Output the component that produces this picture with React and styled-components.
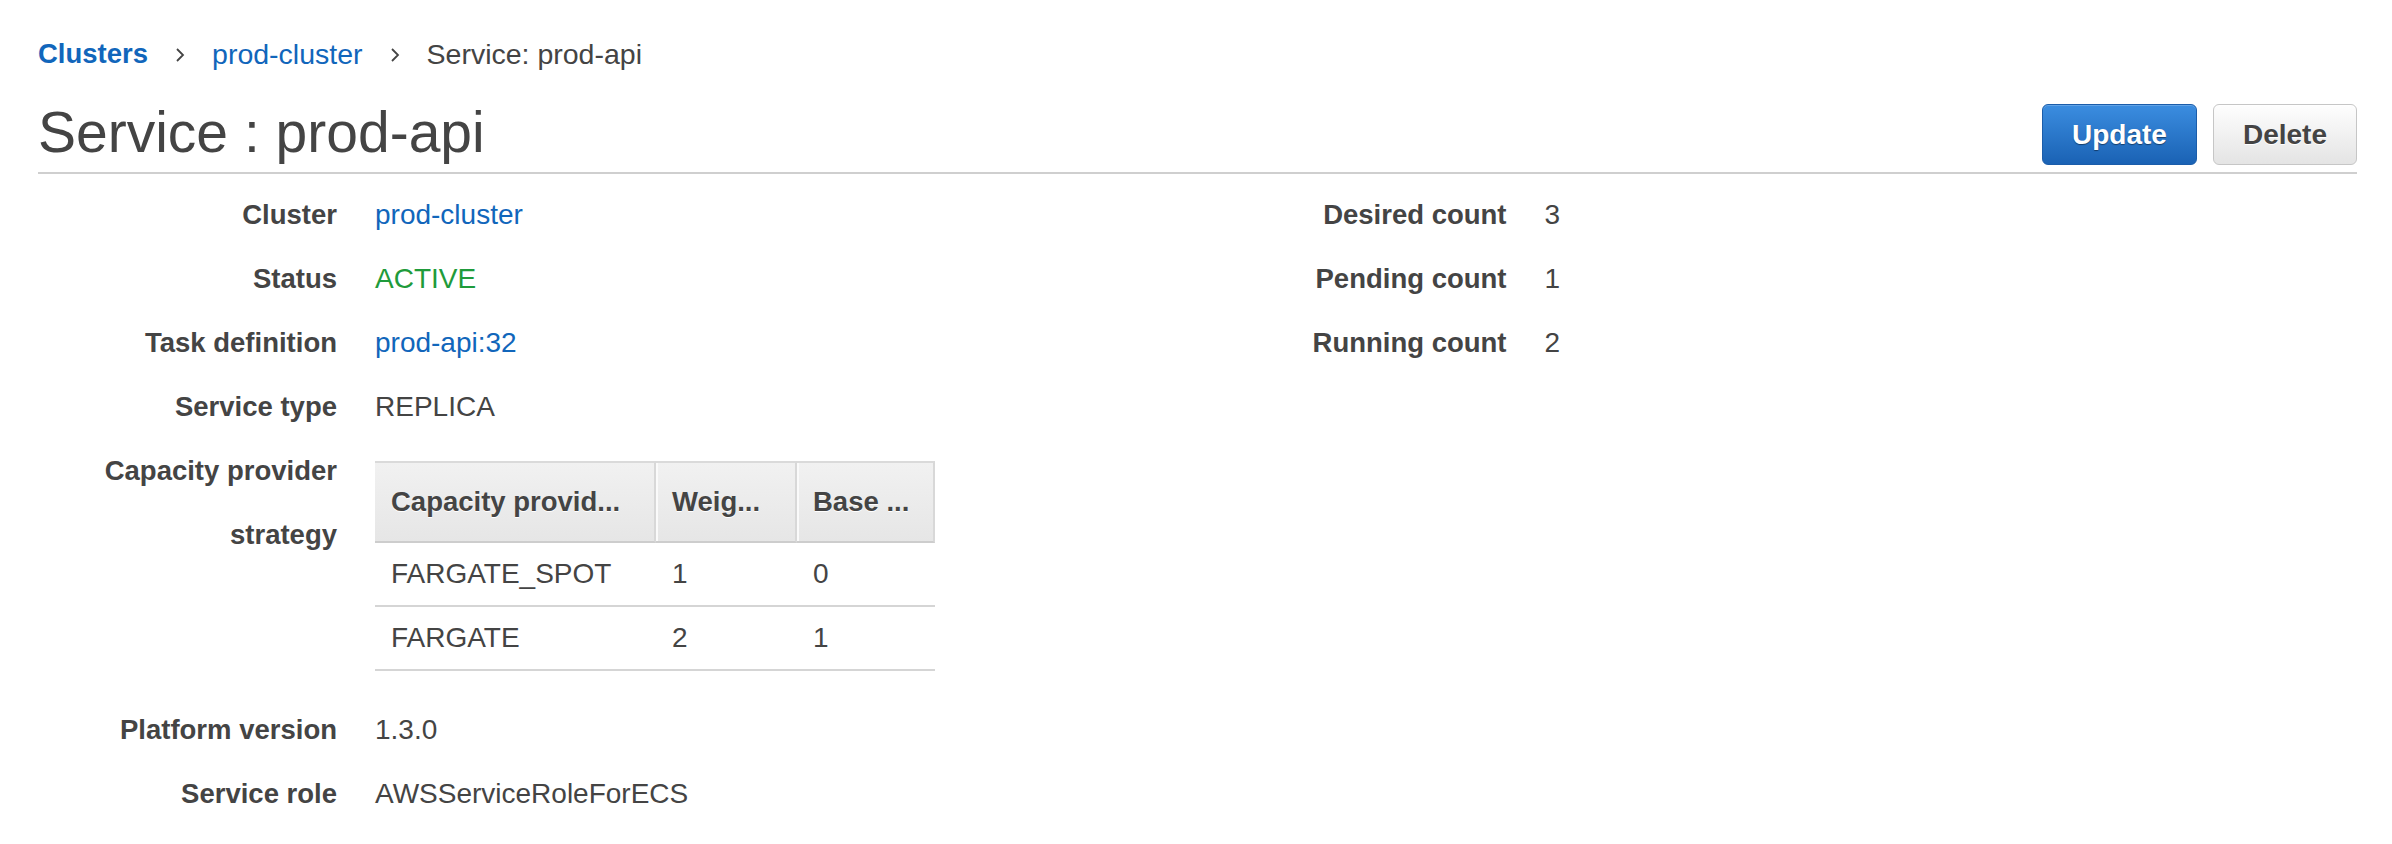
import React from 'react';
import styled, { createGlobalStyle } from 'styled-components';

const GlobalStyle = createGlobalStyle`
  body {
    margin: 0;
    background: #fff;
    font-family: "Liberation Sans", Arial, Helvetica, sans-serif;
    color: #444;
  }
`;

const Page = styled.div`
  padding: 38px 35px 0 38px;
  font-size: 28px;
`;

const Breadcrumbs = styled.nav`
  display: flex;
  align-items: center;
  gap: 27px;
  height: 32px;
  line-height: 32px;
`;

const Crumb = styled.a`
  color: ${props => (props.current ? '#444' : '#1166bb')};
  font-weight: ${props => (props.strong ? 700 : 400)};
  font-size: ${props => (props.strong ? '27.5px' : '28.5px')};
  text-decoration: none;
`;

const Chevron = styled.svg`
  width: 10px;
  height: 16px;
  margin-top: 2px;
`;

const HeaderRow = styled.div`
  display: flex;
  align-items: flex-end;
  justify-content: space-between;
  margin-top: 34px;
  padding-bottom: 7px;
  border-bottom: 2px solid #cfcfcf;
`;

const Title = styled.h1`
  margin: 0 0 4px;
  font-size: 57px;
  line-height: 57px;
  font-weight: 400;
  color: #444;
`;

const Actions = styled.div`
  display: flex;
  gap: 16px;
`;

const Button = styled.button`
  height: 61px;
  padding: 0 29px;
  font-family: inherit;
  font-size: 28px;
  font-weight: 700;
  border-radius: 6px;
  cursor: pointer;
  border: 1px solid ${props => (props.primary ? '#1b5daa' : '#c6c6c6')};
  color: ${props => (props.primary ? '#fff' : '#444')};
  background: ${props =>
    props.primary
      ? 'linear-gradient(#3b8de0, #1a62b4)'
      : 'linear-gradient(#fefefe, #e4e4e4)'};
  text-shadow: ${props =>
    props.primary ? '0 1px 1px rgba(0, 0, 0, 0.45)' : '0 1px 0 #fff'};
  box-shadow: ${props =>
    props.primary ? 'inset 0 1px 0 rgba(255,255,255,0.2)' : 'inset 0 1px 0 #fff'};
`;

const DetailsGrid = styled.div`
  display: grid;
  grid-template-columns: 1fr 1fr;
  column-gap: 20px;
  align-items: start;
  margin-top: 9px;
`;

const Column = styled.div`
  display: flex;
  flex-direction: column;
`;

const Row = styled.div`
  display: flex;
  gap: 38px;
  line-height: 64px;
`;

const Label = styled.div`
  flex: 0 0 299px;
  text-align: right;
  font-weight: 700;
  font-size: 27.5px;
  color: #444;
`;

const toneColors = {
  link: '#1166bb',
  success: '#1f9b3b',
  plain: '#444',
};

const Value = styled.div`
  flex: 1;
  font-size: 28px;
  color: ${props => toneColors[props.tone || 'plain']};
`;

const Table = styled.table`
  border-collapse: separate;
  border-spacing: 0;
  margin: 22px 0 27px;
  line-height: normal;
  table-layout: fixed;
  width: 560px;
`;

const HeadCell = styled.th`
  box-sizing: border-box;
  width: ${props => props.w}px;
  height: 82px;
  padding: 0 8px 0 16px;
  text-align: left;
  font-size: 27.5px;
  font-weight: 700;
  color: #444;
  white-space: nowrap;
  overflow: hidden;
  text-shadow: 0 1px 0 #fff;
  background: linear-gradient(#f1f1f1, #e6e6e6);
  border-top: 2px solid #dadada;
  border-bottom: 2px solid #cdcdcd;
  border-right: 2px solid #d8d8d8;
  box-shadow: inset 2px 0 0 #fafafa;

  &:first-child {
    box-shadow: none;
  }
`;

const Cell = styled.td`
  box-sizing: border-box;
  height: 64px;
  padding: 0 16px;
  color: #444;
  border-bottom: 2px solid #d5d5d5;
`;

const leftRows = [
  { label: 'Cluster', value: 'prod-cluster', tone: 'link' },
  { label: 'Status', value: 'ACTIVE', tone: 'success' },
  { label: 'Task definition', value: 'prod-api:32', tone: 'link' },
  { label: 'Service type', value: 'REPLICA' },
];

const rightRows = [
  { label: 'Desired count', value: '3' },
  { label: 'Pending count', value: '1' },
  { label: 'Running count', value: '2' },
];

const strategy = [
  { provider: 'FARGATE_SPOT', weight: 1, base: 0 },
  { provider: 'FARGATE', weight: 2, base: 1 },
];

const ChevronIcon = () => (
  <Chevron viewBox="0 0 10 16">
    <path d="M2 2 L8 8 L2 14" fill="none" stroke="#444" strokeWidth="1.8" />
  </Chevron>
);

const App = () => (
  <>
    <GlobalStyle />
    <Page>
      <Breadcrumbs>
        <Crumb href="#" strong>Clusters</Crumb>
        <ChevronIcon />
        <Crumb href="#">prod-cluster</Crumb>
        <ChevronIcon />
        <Crumb as="span" current>Service: prod-api</Crumb>
      </Breadcrumbs>

      <HeaderRow>
        <Title>Service : prod-api</Title>
        <Actions>
          <Button primary>Update</Button>
          <Button>Delete</Button>
        </Actions>
      </HeaderRow>

      <DetailsGrid>
        <Column>
          {leftRows.map(row => (
            <Row key={row.label}>
              <Label>{row.label}</Label>
              <Value tone={row.tone}>{row.value}</Value>
            </Row>
          ))}
          <Row>
            <Label>Capacity provider strategy</Label>
            <Value>
              <Table>
                <thead>
                  <tr>
                    <HeadCell w={281}>Capacity provid...</HeadCell>
                    <HeadCell w={141}>Weig...</HeadCell>
                    <HeadCell w={138}>Base ...</HeadCell>
                  </tr>
                </thead>
                <tbody>
                  {strategy.map(item => (
                    <tr key={item.provider}>
                      <Cell>{item.provider}</Cell>
                      <Cell>{item.weight}</Cell>
                      <Cell>{item.base}</Cell>
                    </tr>
                  ))}
                </tbody>
              </Table>
            </Value>
          </Row>
          <Row>
            <Label>Platform version</Label>
            <Value>1.3.0</Value>
          </Row>
          <Row>
            <Label>Service role</Label>
            <Value>AWSServiceRoleForECS</Value>
          </Row>
        </Column>
        <Column>
          {rightRows.map(row => (
            <Row key={row.label}>
              <Label>{row.label}</Label>
              <Value>{row.value}</Value>
            </Row>
          ))}
        </Column>
      </DetailsGrid>
    </Page>
  </>
);

export default App;
